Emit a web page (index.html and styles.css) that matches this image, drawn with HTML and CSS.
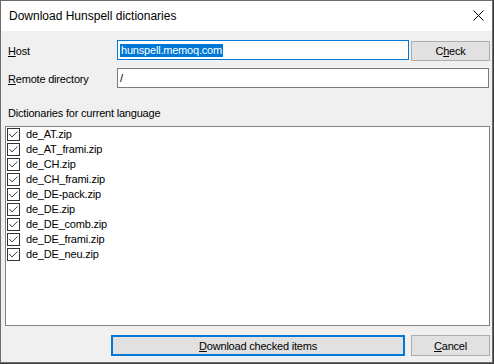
FILE: index.html
```html
<!DOCTYPE html>
<html>
<head>
  <meta http-equiv="Content-Type" content="text/html; charset=UTF-8">
  <title>Download Hunspell dictionaries</title>
  <link rel="stylesheet" href="styles.css">
</head>
<body>
  <div class="window">
    <div class="titlebar">
      <span class="title">Download Hunspell dictionaries</span>
      <svg class="close" width="11" height="11" viewBox="0 0 11 11">
        <path d="M0.5 0.5 L10.5 10.5 M10.5 0.5 L0.5 10.5" stroke="#000" stroke-width="1" fill="none"/>
      </svg>
    </div>
    <div class="content">
      <div class="row host-row">
        <label class="label"><u>H</u>ost</label>
        <div class="textbox focused"><span class="selected">hunspell.memoq.com</span></div>
        <button type="button" class="btn check">C<u>h</u>eck</button>
      </div>
      <div class="row remote-row">
        <label class="label"><u>R</u>emote directory</label>
        <div class="textbox wide">/</div>
      </div>
      <div class="list-label">Dictionaries for current language</div>
      <ul class="list">
        <li><span class="box"></span>de_AT.zip</li>
        <li><span class="box"></span>de_AT_frami.zip</li>
        <li><span class="box"></span>de_CH.zip</li>
        <li><span class="box"></span>de_CH_frami.zip</li>
        <li><span class="box"></span>de_DE-pack.zip</li>
        <li><span class="box"></span>de_DE.zip</li>
        <li><span class="box"></span>de_DE_comb.zip</li>
        <li><span class="box"></span>de_DE_frami.zip</li>
        <li><span class="box"></span>de_DE_neu.zip</li>
      </ul>
      <div class="buttons">
        <button type="button" class="btn default"><u>D</u>ownload checked items</button>
        <button type="button" class="btn cancel"><u>C</u>ancel</button>
      </div>
    </div>
  </div>
</body>
</html>
```

FILE: styles.css
```css
html {
  background-color: #3b3b3b;
}
body {
  margin: 0;
  font-family: "Liberation Sans", Arial, sans-serif;
  font-size: 11px;
  letter-spacing: -0.2px;
  color: #000;
}
.window {
  width: 493px;
  height: 363px;
  box-sizing: border-box;
  border: 1px solid #6d6d6d;
  background-color: #f0f0f0;
}
.titlebar {
  height: 30px;
  background-color: #fff;
  display: flex;
  align-items: center;
  justify-content: space-between;
  padding: 0 8px 0 8px;
}
.title {
  font-family: "Liberation Sans", Arial, sans-serif;
  font-size: 12px;
  letter-spacing: 0;
  color: #000;
}
.close {
  display: block;
  margin-top: -1px;
}
.content {
  padding: 9px 2px 0 4px;
}
.row {
  display: flex;
  align-items: flex-start;
}
.label {
  width: 109px;
  padding-left: 3px;
  line-height: 20px;
  margin-top: 1px;
}
.textbox {
  box-sizing: border-box;
  width: 292px;
  height: 20px;
  background-color: #fff;
  border: 1px solid #7a7a7a;
  padding: 3px 2px 0 2px;
  line-height: 13px;
}
.textbox.focused {
  border-color: #0078d7;
}
.textbox.wide {
  width: 372px;
}
.selected {
  background-color: #0078d7;
  color: #fff;
  padding: 0 1px 0 1px;
  display: inline-block;
}
.btn {
  box-sizing: border-box;
  height: 21px;
  width: 79px;
  padding: 0;
  background-color: #e1e1e1;
  border: 1px solid #adadad;
  font-family: "Liberation Sans", Arial, sans-serif;
  font-size: 11px;
  letter-spacing: -0.2px;
  color: #000;
}
.check {
  margin-left: 2px;
  margin-top: 1px;
  height: 20px;
}
.remote-row {
  margin-top: 7px;
}
.list-label {
  margin-top: 18px;
  padding-left: 3px;
  line-height: 13px;
}
.list {
  list-style: none;
  margin: 6px 0 0 0;
  padding: 0;
  box-sizing: border-box;
  height: 200px;
  background-color: #fff;
  border: 1px solid #828282;
}
.list li {
  display: flex;
  align-items: center;
  height: 15px;
  line-height: 15px;
  padding-left: 1px;
}
.box {
  box-sizing: border-box;
  width: 13px;
  height: 13px;
  margin-right: 6px;
  border: 1px solid #333;
  background: url("data:image/svg+xml,%3Csvg xmlns='http://www.w3.org/2000/svg' width='11' height='11'%3E%3Cpath d='M1.5 5 L4 8 L9.5 2.5' stroke='%23444' stroke-width='1' fill='none'/%3E%3C/svg%3E") no-repeat;
}
.buttons {
  margin-top: 9px;
  display: flex;
  justify-content: flex-end;
  gap: 6px;
}
.default {
  width: 294px;
  border: 2px solid #0078d7;
}
```
